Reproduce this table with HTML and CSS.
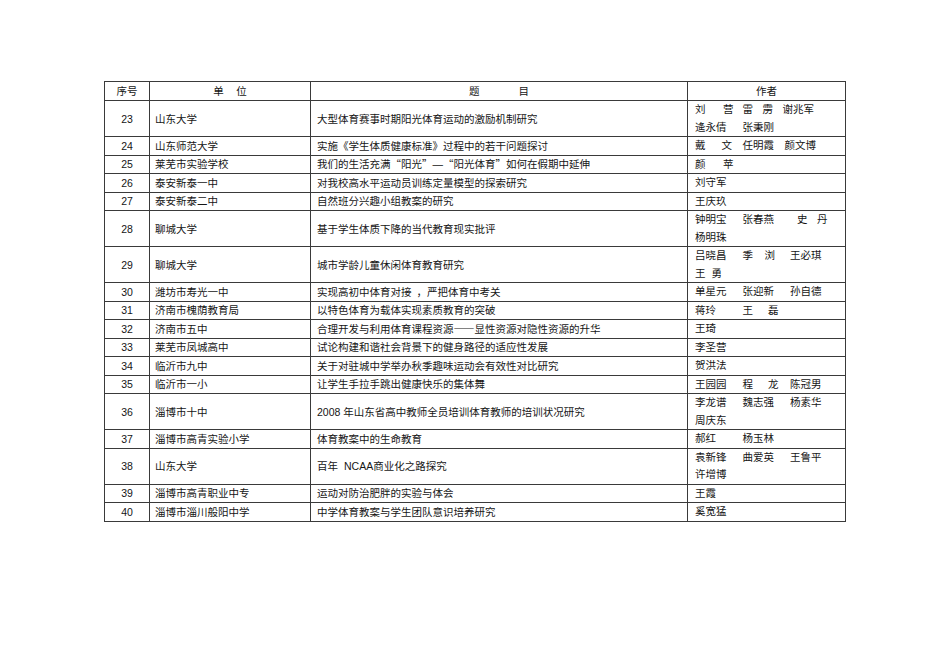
FILE: index.html
```html
<!DOCTYPE html>
<html lang="zh">
<head>
<meta charset="utf-8">
<title>课题列表</title>
<link rel="stylesheet" href="styles.css">
</head>
<body>
<div class="page">
<table class="list">
<colgroup><col class="c1"><col class="c2"><col class="c3"><col class="c4"></colgroup>
<tr class="h">
  <th>序号</th>
  <th>单<i class="hg1"></i>位</th>
  <th>题<i class="hg2"></i>目</th>
  <th>作者</th>
</tr>
<tr class="d">
  <td class="no">23</td><td class="unit">山东大学</td>
  <td class="title">大型体育赛事时期阳光体育运动的激励机制研究</td>
  <td class="au"><div class="ln"><span class="n">刘<i class="g17"></i>营</span><span class="n t">雷<i class="g10"></i>雳</span><span class="n">谢兆军</span></div><div class="ln"><span class="n">逄永倩</span><span class="n">张秉刚</span></div></td>
</tr>
<tr class="s">
  <td class="no">24</td><td class="unit">山东师范大学</td>
  <td class="title">实施《学生体质健康标准》过程中的若干问题探讨</td>
  <td class="au"><div class="ln"><span class="n">戴<i class="g16"></i>文</span><span class="n t2">任明霞</span><span class="n">颜文博</span></div></td>
</tr>
<tr class="s">
  <td class="no">25</td><td class="unit">莱芜市实验学校</td>
  <td class="title">我们的生活充满<span class="cj">“</span>阳光<span class="cj">”</span>—<span class="cj">“</span>阳光体育<span class="cj">”</span>如何在假期中延伸</td>
  <td class="au"><div class="ln"><span class="n">颜<i class="g17"></i>苹</span></div></td>
</tr>
<tr class="s">
  <td class="no">26</td><td class="unit">泰安新泰一中</td>
  <td class="title">对我校高水平运动员训练定量模型的探索研究</td>
  <td class="au"><div class="ln"><span class="n">刘守军</span></div></td>
</tr>
<tr class="s">
  <td class="no">27</td><td class="unit">泰安新泰二中</td>
  <td class="title">自然班分兴趣小组教案的研究</td>
  <td class="au"><div class="ln"><span class="n">王庆玖</span></div></td>
</tr>
<tr class="d">
  <td class="no">28</td><td class="unit">聊城大学</td>
  <td class="title">基于学生体质下降的当代教育现实批评</td>
  <td class="au"><div class="ln"><span class="n">钟明宝</span><span class="n">张春燕</span><span class="n ind">史<i class="g10"></i>丹</span></div><div class="ln"><span class="n">杨明珠</span></div></td>
</tr>
<tr class="d">
  <td class="no">29</td><td class="unit">聊城大学</td>
  <td class="title">城市学龄儿童休闲体育教育研究</td>
  <td class="au"><div class="ln"><span class="n">吕晓昌</span><span class="n">季<i class="g12"></i>浏</span><span class="n">王必琪</span></div><div class="ln"><span class="n">王<i class="g6"></i>勇</span></div></td>
</tr>
<tr class="s">
  <td class="no">30</td><td class="unit">潍坊市寿光一中</td>
  <td class="title">实现高初中体育对接<span class="cm">，</span>严把体育中考关</td>
  <td class="au"><div class="ln"><span class="n">单星元</span><span class="n">张迎新</span><span class="n">孙自德</span></div></td>
</tr>
<tr class="s">
  <td class="no">31</td><td class="unit">济南市槐荫教育局</td>
  <td class="title">以特色体育为载体实现素质教育的突破</td>
  <td class="au"><div class="ln"><span class="n">蒋玲</span><span class="n">王<i class="g15"></i>磊</span></div></td>
</tr>
<tr class="s">
  <td class="no">32</td><td class="unit">济南市五中</td>
  <td class="title">合理开发与利用体育课程资源<span class="cj">——</span>显性资源对隐性资源的升华</td>
  <td class="au"><div class="ln"><span class="n">王琦</span></div></td>
</tr>
<tr class="s">
  <td class="no">33</td><td class="unit">莱芜市凤城高中</td>
  <td class="title">试论构建和谐社会背景下的健身路径的适应性发展</td>
  <td class="au"><div class="ln"><span class="n">李圣营</span></div></td>
</tr>
<tr class="s">
  <td class="no">34</td><td class="unit">临沂市九中</td>
  <td class="title">关于对驻城中学举办秋季趣味运动会有效性对比研究</td>
  <td class="au"><div class="ln"><span class="n">贺洪法</span></div></td>
</tr>
<tr class="s">
  <td class="no">35</td><td class="unit">临沂市一小</td>
  <td class="title">让学生手拉手跳出健康快乐的集体舞</td>
  <td class="au"><div class="ln"><span class="n">王园园</span><span class="n">程<i class="g15"></i>龙</span><span class="n">陈冠男</span></div></td>
</tr>
<tr class="d">
  <td class="no">36</td><td class="unit">淄博市十中</td>
  <td class="title">2008 年山东省高中教师全员培训体育教师的培训状况研究</td>
  <td class="au"><div class="ln"><span class="n">李龙谱</span><span class="n">魏志强</span><span class="n">杨素华</span></div><div class="ln"><span class="n">周庆东</span></div></td>
</tr>
<tr class="s">
  <td class="no">37</td><td class="unit">淄博市高青实验小学</td>
  <td class="title">体育教案中的生命教育</td>
  <td class="au"><div class="ln"><span class="n">郝红</span><span class="n">杨玉林</span></div></td>
</tr>
<tr class="d">
  <td class="no">38</td><td class="unit">山东大学</td>
  <td class="title">百年<i class="g6"></i>NCAA商业化之路探究</td>
  <td class="au"><div class="ln"><span class="n">袁新锋</span><span class="n">曲爱英</span><span class="n">王鲁平</span></div><div class="ln"><span class="n">许增博</span></div></td>
</tr>
<tr class="s">
  <td class="no">39</td><td class="unit">淄博市高青职业中专</td>
  <td class="title">运动对防治肥胖的实验与体会</td>
  <td class="au"><div class="ln"><span class="n">王霞</span></div></td>
</tr>
<tr class="s">
  <td class="no">40</td><td class="unit">淄博市淄川般阳中学</td>
  <td class="title">中学体育教案与学生团队意识培养研究</td>
  <td class="au"><div class="ln"><span class="n">奚宽猛</span></div></td>
</tr>
</table>
</div>
</body>
</html>
```

FILE: styles.css
```css
html, body {
  margin: 0;
  background: #ffffff;
}
body {
  color: #151515;
  font-family: "Liberation Sans", "Noto Sans CJK SC", sans-serif;
  font-size: 10.5px;
}
.page {
  padding: 81px 0 0 104px;
}
.list {
  border-collapse: collapse;
  table-layout: fixed;
  width: 741px;
}
.c1 { width: 45px; }
.c2 { width: 161px; }
.c3 { width: 377px; }
.c4 { width: 158px; }

.list th,
.list td {
  border: 1px solid #3a3a3a;
  padding: 0;
  line-height: 16px;
  vertical-align: middle;
  font-weight: normal;
  white-space: nowrap;
  overflow: hidden;
  text-align: left;
}
.list th {
  text-align: center;
}
.h { height: 19px; }
.s { height: 17.2px; }
.d { height: 35.4px; }

.list td.no {
  text-align: center;
  font-size: 10.5px;
}
.list td.unit { padding-left: 5px; }
.list td.title { padding-left: 6px; }
.list td.au { padding-left: 7px; }

.ln {
  display: flex;
  line-height: 17.5px;
}
.n {
  flex: none;
  width: 47.5px;
  display: flex;
}
.n.t { width: 40px; }
.n.t2 { width: 42px; }
.n.ind { padding-left: 7px; }

i { display: inline-block; flex: none; }
.g6 { width: 6px; }
.g10 { width: 9.5px; }
.g12 { width: 11.5px; }
.g15 { width: 15px; }
.g16 { width: 16px; }
.g17 { width: 17.5px; }
.hg1 { width: 12.5px; }
.hg2 { width: 39px; }

.cj { font-family: "Noto Sans CJK SC", sans-serif; }
.cm {
  font-family: "Noto Sans CJK SC", sans-serif;
  margin-left: 5px;
}
```
